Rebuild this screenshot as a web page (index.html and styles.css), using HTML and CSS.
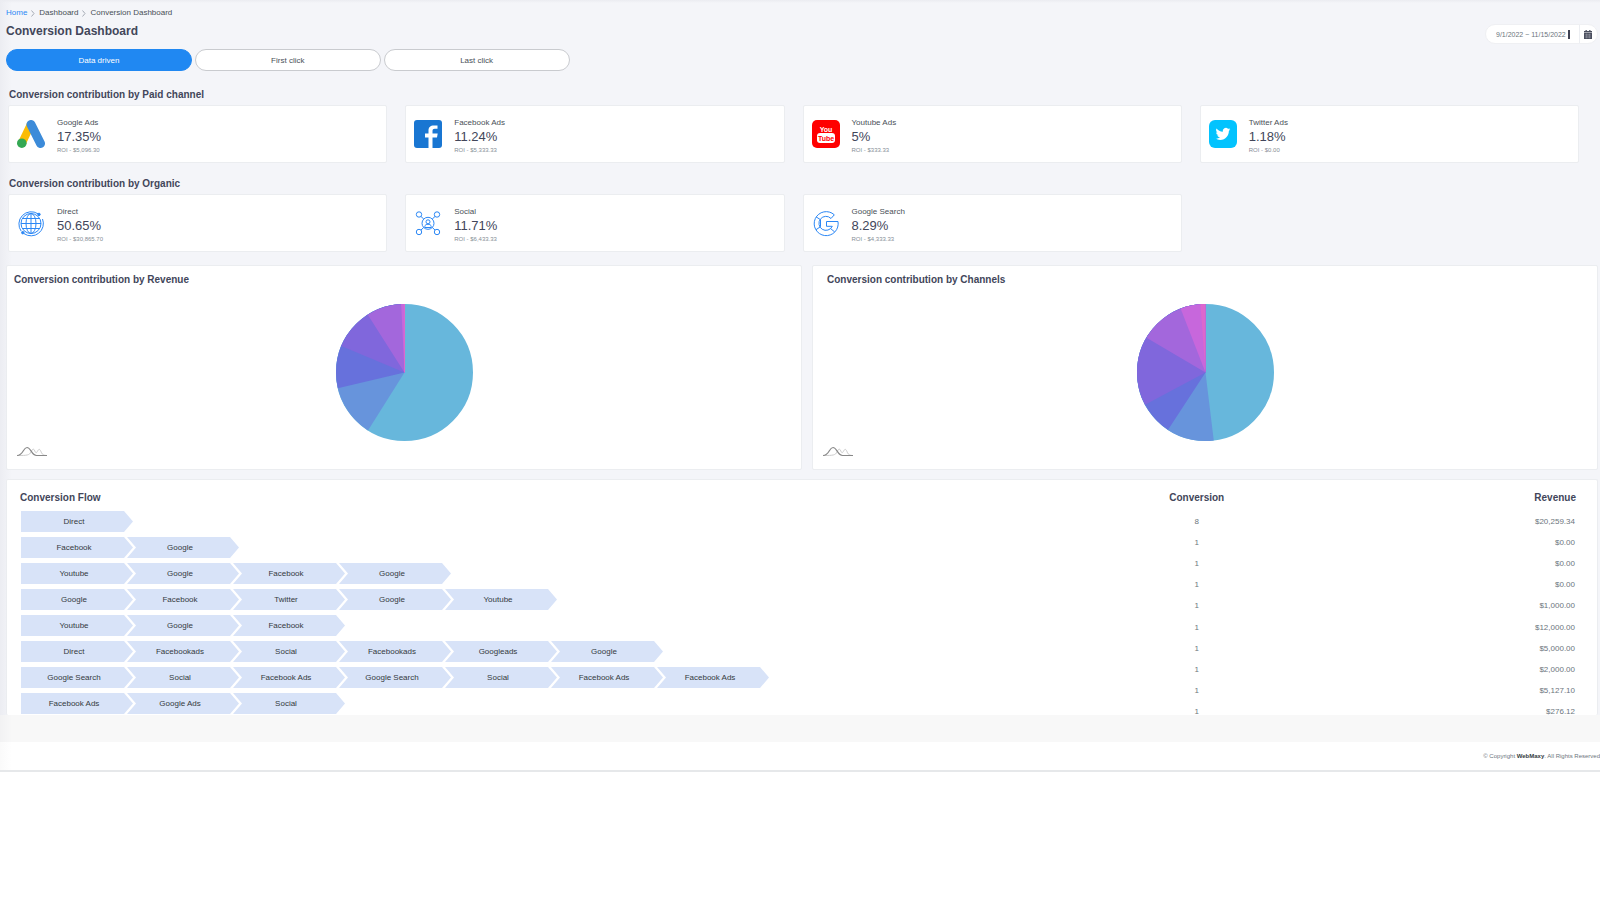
FILE: index.html
```html
<!DOCTYPE html>
<html lang="en">
<head>
<meta charset="utf-8">
<title>Conversion Dashboard</title>
<link rel="stylesheet" href="styles.css">
</head>
<body>
<svg class="defs" aria-hidden="true">
  <symbol id="curve-logo" viewBox="0 0 30 10">
    <path d="M1 9c9 0 11.500-.3 13-3.500s2.500-4 3.800-1 2 1.500 3-.3 2-1.800 3 .5 1.800 4.300 5.200 4.300" fill="none" stroke="#ccc" stroke-width="1"/>
    <path d="M0 9c6.500 0 6-8 10-8s4.500 8 9.500 8H30" fill="none" stroke="#888" stroke-width="1.200"/>
  </symbol>
</svg>
<main class="page">
  <header class="top">
    <div class="top-text">
      <nav class="crumbs" aria-label="Breadcrumb">
        <a href="#">Home</a>
        <svg class="sep" viewBox="0 0 4 7"><path d="M.5.500l2.500 3-2.500 3"/></svg>
        <span>Dashboard</span>
        <svg class="sep" viewBox="0 0 4 7"><path d="M.5.500l2.500 3-2.500 3"/></svg>
        <span>Conversion Dashboard</span>
      </nav>
      <h1 class="title">Conversion Dashboard</h1>
    </div>
    <div class="date">
      <input class="date-input" type="text" aria-label="Date range" value="9/1/2022 ~ 11/15/2022">
      <span class="caret"></span>
      <button class="date-button" type="button" aria-label="Open calendar">
        <svg viewBox="0 0 8 9"><path d="M1.500 0h1.300v1h2.400V0h1.300v1H8v1.500H0V1h1.500zM0 3h8v6H0z" fill="#4a4e5e"/><path d="M1 4.900h6M1 7h6M2.700 3.600v4.800M5.300 3.600v4.800" stroke="#aaadb5" stroke-width=".5"/></svg>
      </button>
    </div>
  </header>

  <div class="models">
    <button class="model active" type="button">Data driven</button>
    <button class="model" type="button">First click</button>
    <button class="model" type="button">Last click</button>
  </div>

  <section class="group">
    <h2 class="heading">Conversion contribution by Paid channel</h2>
    <div class="cards">
      <article class="card">
        <svg class="icon" viewBox="0 0 28 28"><path d="M14 4L5 23" stroke="#fbbc04" stroke-width="8"/><path d="M14 4.500L23.500 23.500" stroke="#3c8bd9" stroke-width="9" stroke-linecap="round"/><circle cx="4.800" cy="23.200" r="4.800" fill="#34a853"/></svg>
        <div class="card-text"><h3 class="label">Google Ads</h3><p class="value">17.35%</p><p class="roi">ROI - $5,096.30</p></div>
      </article>
      <article class="card">
        <svg class="icon" viewBox="0 0 28 28"><rect width="28" height="28" rx="3" fill="#1976d2"/><path d="M18.500 28V17.500h4.500l.7-4h-5.200v-2.500c0-1.500.7-2.200 2.300-2.200H23.500V5.500h-3.400c-4 0-5.600 2-5.600 5V13.500H11v4h3.500V28z" fill="#fff"/></svg>
        <div class="card-text"><h3 class="label">Facebook Ads</h3><p class="value">11.24%</p><p class="roi">ROI - $5,333.33</p></div>
      </article>
      <article class="card">
        <svg class="icon" viewBox="0 0 28 28"><rect width="28" height="28" rx="5" fill="#f00"/><rect x="5" y="13" width="18" height="10" rx="3" fill="#fff"/><text class="yt" x="14" y="12" fill="#fff">You</text><text class="yt" x="14" y="21" fill="#f00">Tube</text></svg>
        <div class="card-text"><h3 class="label">Youtube Ads</h3><p class="value">5%</p><p class="roi">ROI - $333.33</p></div>
      </article>
      <article class="card">
        <svg class="icon" viewBox="0 0 28 28"><rect width="28" height="28" rx="6" fill="#03c3fe"/><path transform="translate(6.500 6.500) scale(.62)" d="M23.950 4.570a10 10 0 0 1-2.820.780 4.960 4.960 0 0 0 2.160-2.720c-.95.550-2 .95-3.120 1.180a4.920 4.920 0 0 0-8.390 4.480C7.690 8.090 4.070 6.130 1.640 3.160a4.820 4.820 0 0 0-.67 2.480c0 1.700.87 3.200 2.190 4.090a4.900 4.900 0 0 1-2.230-.61v.06a4.920 4.920 0 0 0 3.950 4.820 5 5 0 0 1-2.210.08 4.940 4.940 0 0 0 4.600 3.420A9.870 9.870 0 0 1 0 19.540a14 14 0 0 0 7.550 2.210c9.050 0 14-7.500 14-13.980l-.02-.63a9.940 9.940 0 0 0 2.420-2.570z" fill="#fff"/></svg>
        <div class="card-text"><h3 class="label">Twitter Ads</h3><p class="value">1.18%</p><p class="roi">ROI - $0.00</p></div>
      </article>
    </div>
  </section>

  <section class="group">
    <h2 class="heading">Conversion contribution by Organic</h2>
    <div class="cards">
      <article class="card">
        <svg class="icon line" viewBox="0 0 28 28"><circle cx="14" cy="14.500" r="10"/><ellipse cx="14" cy="14.500" rx="5" ry="10"/><path d="M14 4.500v20M4 14.500h20M5.500 9.500h17M5.500 19.500h17"/><path d="M21 4.800A12.300 12.300 0 0 0 4.200 22.200M25.500 10A12.300 12.300 0 0 1 7 24.600"/><circle cx="22" cy="5.400" r="1.200" fill="#2b87f5"/><circle cx="5.800" cy="23.700" r="1.200" fill="#2b87f5"/></svg>
        <div class="card-text"><h3 class="label">Direct</h3><p class="value">50.65%</p><p class="roi">ROI - $30,865.70</p></div>
      </article>
      <article class="card">
        <svg class="icon line" viewBox="0 0 28 28"><circle cx="5" cy="5.500" r="2.700"/><circle cx="23" cy="5.500" r="2.700"/><circle cx="5" cy="23" r="2.700"/><circle cx="23" cy="23" r="2.700"/><circle cx="14" cy="14.300" r="6"/><circle cx="14" cy="12.800" r="2"/><path d="M10.800 18.500v-1c0-3 6.400-3 6.400 0v1zM7 7.500l2.800 2.600M21 7.500l-2.800 2.600M7 21l2.800-2.600M21 21l-2.800-2.600"/></svg>
        <div class="card-text"><h3 class="label">Social</h3><p class="value">11.71%</p><p class="roi">ROI - $6,433.33</p></div>
      </article>
      <article class="card">
        <svg class="icon line" viewBox="0 0 28 28"><path d="M19 9.500l3.300-3.700A12 12 0 1 0 26 12.500H14.500v4.800h5.800a7 7 0 1 1-1.300-7.800zM4 7.800l4.500 2.900v7L4 20.700M18.500 19.500l4 3.300"/></svg>
        <div class="card-text"><h3 class="label">Google Search</h3><p class="value">8.29%</p><p class="roi">ROI - $4,333.33</p></div>
      </article>
    </div>
  </section>

  <div class="charts">
    <section class="panel chart">
      <h2 class="heading">Conversion contribution by Revenue</h2>
      <svg class="pie" viewBox="0 0 138 138" role="img" aria-label="Revenue share by channel">
        <g transform="rotate(-90 69 69)">
          <circle cx="69" cy="69" r="34.500" pathLength="100" stroke="#67b7dc"/>
          <circle cx="69" cy="69" r="34.500" pathLength="100" stroke="#6794dc" stroke-dasharray="41.050 100" stroke-dashoffset="-58.950"/>
          <circle cx="69" cy="69" r="34.500" pathLength="100" stroke="#6771dc" stroke-dasharray="28.700 100" stroke-dashoffset="-71.300"/>
          <circle cx="69" cy="69" r="34.500" pathLength="100" stroke="#8067dc" stroke-dasharray="18.700 100" stroke-dashoffset="-81.300"/>
          <circle cx="69" cy="69" r="34.500" pathLength="100" stroke="#a367dc" stroke-dasharray="9 100" stroke-dashoffset="-91"/>
          <circle cx="69" cy="69" r="34.500" pathLength="100" stroke="#c767dc" stroke-dasharray=".8 100" stroke-dashoffset="-99.200"/>
        </g>
        <path d="M69 0v69" stroke="#dc67ce"/>
      </svg>
      <svg class="curve"><use href="#curve-logo"/></svg>
    </section>
    <section class="panel chart chart-channels">
      <h2 class="heading">Conversion contribution by Channels</h2>
      <svg class="pie" viewBox="0 0 138 138" role="img" aria-label="Conversion share by channel">
        <g transform="rotate(-90 69 69)">
          <circle cx="69" cy="69" r="34.500" pathLength="100" stroke="#67b7dc"/>
          <circle cx="69" cy="69" r="34.500" pathLength="100" stroke="#6794dc" stroke-dasharray="51.950 100" stroke-dashoffset="-48.050"/>
          <circle cx="69" cy="69" r="34.500" pathLength="100" stroke="#6771dc" stroke-dasharray="40.800 100" stroke-dashoffset="-59.200"/>
          <circle cx="69" cy="69" r="34.500" pathLength="100" stroke="#8067dc" stroke-dasharray="32.800 100" stroke-dashoffset="-67.200"/>
          <circle cx="69" cy="69" r="34.500" pathLength="100" stroke="#a367dc" stroke-dasharray="16.500 100" stroke-dashoffset="-83.500"/>
          <circle cx="69" cy="69" r="34.500" pathLength="100" stroke="#c767dc" stroke-dasharray="5.900 100" stroke-dashoffset="-94.100"/>
          <circle cx="69" cy="69" r="34.500" pathLength="100" stroke="#dc67ce" stroke-dasharray="1.200 100" stroke-dashoffset="-98.800"/>
        </g>
      </svg>
      <svg class="curve"><use href="#curve-logo"/></svg>
    </section>
  </div>

  <section class="panel flows">
    <div class="paths">
      <h2 class="heading">Conversion Flow</h2>
      <ol class="path"><li>Direct</li></ol>
      <ol class="path"><li>Facebook</li><li>Google</li></ol>
      <ol class="path"><li>Youtube</li><li>Google</li><li>Facebook</li><li>Google</li></ol>
      <ol class="path"><li>Google</li><li>Facebook</li><li>Twitter</li><li>Google</li><li>Youtube</li></ol>
      <ol class="path"><li>Youtube</li><li>Google</li><li>Facebook</li></ol>
      <ol class="path"><li>Direct</li><li>Facebookads</li><li>Social</li><li>Facebookads</li><li>Googleads</li><li>Google</li></ol>
      <ol class="path"><li>Google Search</li><li>Social</li><li>Facebook Ads</li><li>Google Search</li><li>Social</li><li>Facebook Ads</li><li>Facebook Ads</li></ol>
      <ol class="path"><li>Facebook Ads</li><li>Google Ads</li><li>Social</li></ol>
    </div>
    <table class="totals">
      <thead><tr><th scope="col">Conversion</th><th scope="col">Revenue</th></tr></thead>
      <tbody>
        <tr><td>8</td><td>$20,259.34</td></tr>
        <tr><td>1</td><td>$0.00</td></tr>
        <tr><td>1</td><td>$0.00</td></tr>
        <tr><td>1</td><td>$0.00</td></tr>
        <tr><td>1</td><td>$1,000.00</td></tr>
        <tr><td>1</td><td>$12,000.00</td></tr>
        <tr><td>1</td><td>$5,000.00</td></tr>
        <tr><td>1</td><td>$2,000.00</td></tr>
        <tr><td>1</td><td>$5,127.10</td></tr>
        <tr><td>1</td><td>$276.12</td></tr>
      </tbody>
    </table>
  </section>
</main>
<footer class="footer">
  <p class="copyright">© Copyright <b>WebMaxy</b>. All Rights Reserved</p>
</footer>
</body>
</html>
```
FILE: styles.css
```css
* {
  box-sizing: border-box;
}

body,
h1,
h2,
h3,
p,
ol {
  margin: 0;
  padding: 0;
}

body {
  background: #fff;
  color: #495057;
  font-family: "Liberation Sans", Arial, sans-serif;
  font-size: 8px;
  line-height: 12px;
}

button,
input {
  font-family: inherit;
  color: inherit;
}

.defs {
  display: none;
}

.page {
  display: flex;
  flex-direction: column;
  padding: 7px 2px 0 6px;
  background:
    linear-gradient(#ebecf1, #f4f5f900) top / 100% 3px no-repeat,
    linear-gradient(90deg, #ecedf2, #f4f5f900) left / 12px 100% no-repeat,
    #f4f5f9;
}

.top {
  display: flex;
  justify-content: space-between;
  align-items: flex-end;
}

.crumbs {
  display: flex;
  align-items: center;
  gap: 4px;
}

.crumbs a {
  color: #2b87f5;
  text-decoration: none;
}

.sep {
  width: 4px;
  height: 7px;
  fill: none;
  stroke: #a6abb5;
}

.title {
  margin: 4px 0 10px;
  color: #42465a;
  font-size: 12px;
  line-height: 16px;
}

.date {
  display: flex;
  align-items: center;
  height: 20px;
  margin-bottom: 5px;
  border: 1px solid #eff0f3;
  border-radius: 10px;
  background: #fff;
}

.date-input {
  width: 82px;
  padding: 0 0 0 10px;
  border: 0;
  outline: 0;
  background: none;
  color: #6c757d;
  font-size: 7px;
}

.caret {
  width: 2px;
  height: 9px;
  margin-right: 9px;
  background: #3f4254;
}

.date-button {
  display: flex;
  align-items: center;
  width: 18px;
  height: 18px;
  padding: 0 5px 0 4px;
  border: 0;
  border-left: 1px solid #eceef2;
  background: none;
}

.date-button svg {
  width: 8px;
  height: 9px;
}

.models {
  display: grid;
  grid-template-columns: repeat(3, 1fr);
  gap: 3px;
  width: 35.4%;
}

.model {
  height: 22px;
  padding: 0;
  border: 1px solid #c9cbcf;
  border-radius: 11px;
  background: #fff;
  font-size: 8px;
}

.model.active {
  border-color: #2088f2;
  background: #2088f2;
  color: #fff;
}

.heading {
  color: #42465a;
  font-size: 10px;
  line-height: 14px;
}

.group {
  margin: 17px 19px 0 2px;
}

.group + .group {
  margin-top: 14px;
}

.group .heading {
  padding-left: 1px;
}

.cards {
  display: grid;
  grid-template-columns: repeat(4, 1fr);
  gap: 18px;
  margin-top: 3px;
}

.card {
  display: flex;
  align-items: center;
  gap: 12px;
  padding: 7px 8px;
  border: 1px solid #ebedf0;
  border-radius: 2px;
  background: #fff;
}

.icon {
  width: 28px;
  height: 28px;
}

.line {
  fill: none;
  stroke: #2b87f5;
}

.yt {
  font-family: "Liberation Sans Narrow", "Liberation Sans", sans-serif;
  font-size: 7px;
  font-weight: bold;
  text-anchor: middle;
}

.card-text {
  padding-top: 4px;
}

.label {
  font-size: 8px;
  font-weight: normal;
  line-height: 12px;
}

.value {
  color: #42465a;
  font-size: 13px;
  line-height: 16px;
}

.roi {
  color: #868e96;
  font-size: 6px;
  line-height: 10px;
}

.panel {
  border: 1px solid #ebedf0;
  border-radius: 2px;
  background: #fff;
}

.charts {
  display: grid;
  grid-template-columns: 796fr 786fr;
  gap: 10px;
  margin-top: 13px;
}

.chart {
  display: flex;
  flex-direction: column;
  padding: 7px 10px 12px;
}

.chart .heading {
  margin-left: -3px;
}

.chart-channels .heading {
  margin-left: 4px;
}

.pie {
  width: 137px;
  height: 137px;
  margin: 17px auto 5px;
}

.pie circle {
  fill: none;
  stroke-width: 69;
}

.curve {
  width: 30px;
  height: 11px;
}

.flows {
  display: grid;
  grid-template-columns: 1148fr 407fr;
  height: 236px;
  margin-top: 9px;
  padding: 11px 21px 0 13px;
  border-bottom: 0;
  overflow: hidden;
}

.paths .heading {
  margin-bottom: 6px;
}

.path {
  display: flex;
  margin: 0 0 5px 1px;
  list-style: none;
}

.path li {
  width: 112px;
  padding-right: 6px;
  background: #d8e3f8;
  clip-path: polygon(0 0, 103px 0, 100% 50%, 103px 100%, 0 100%);
  color: #343a40;
  line-height: 21px;
  text-align: center;
}

.path li + li {
  margin-left: -6px;
  clip-path: polygon(0 0, 103px 0, 100% 50%, 103px 100%, 0 100%, 9px 50%);
}

.totals {
  height: 232px;
  border-collapse: collapse;
  color: #6c757d;
}

.totals th,
.totals td {
  padding: 0;
  text-align: right;
}

.totals th {
  height: 20px;
  color: #42465a;
  font-size: 10px;
  line-height: 14px;
  vertical-align: top;
}

.totals td {
  height: 21px;
}

.totals th:first-child,
.totals td:first-child {
  width: 56px;
  text-align: center;
}

.totals td:last-child {
  padding-right: 1px;
}

.footer {
  padding-top: 27px;
  border-bottom: 2px solid #e6e8ea;
  background: linear-gradient(90deg, #f2f2f3, #f8f8f800) left / 12px 100% no-repeat, #f8f8f8;
}

.copyright {
  height: 28px;
  background: linear-gradient(90deg, #fafafa, #fff 12px);
  color: #6c757d;
  font-size: 6px;
  line-height: 28px;
  text-align: right;
}

.copyright b {
  color: #343a40;
}
```
